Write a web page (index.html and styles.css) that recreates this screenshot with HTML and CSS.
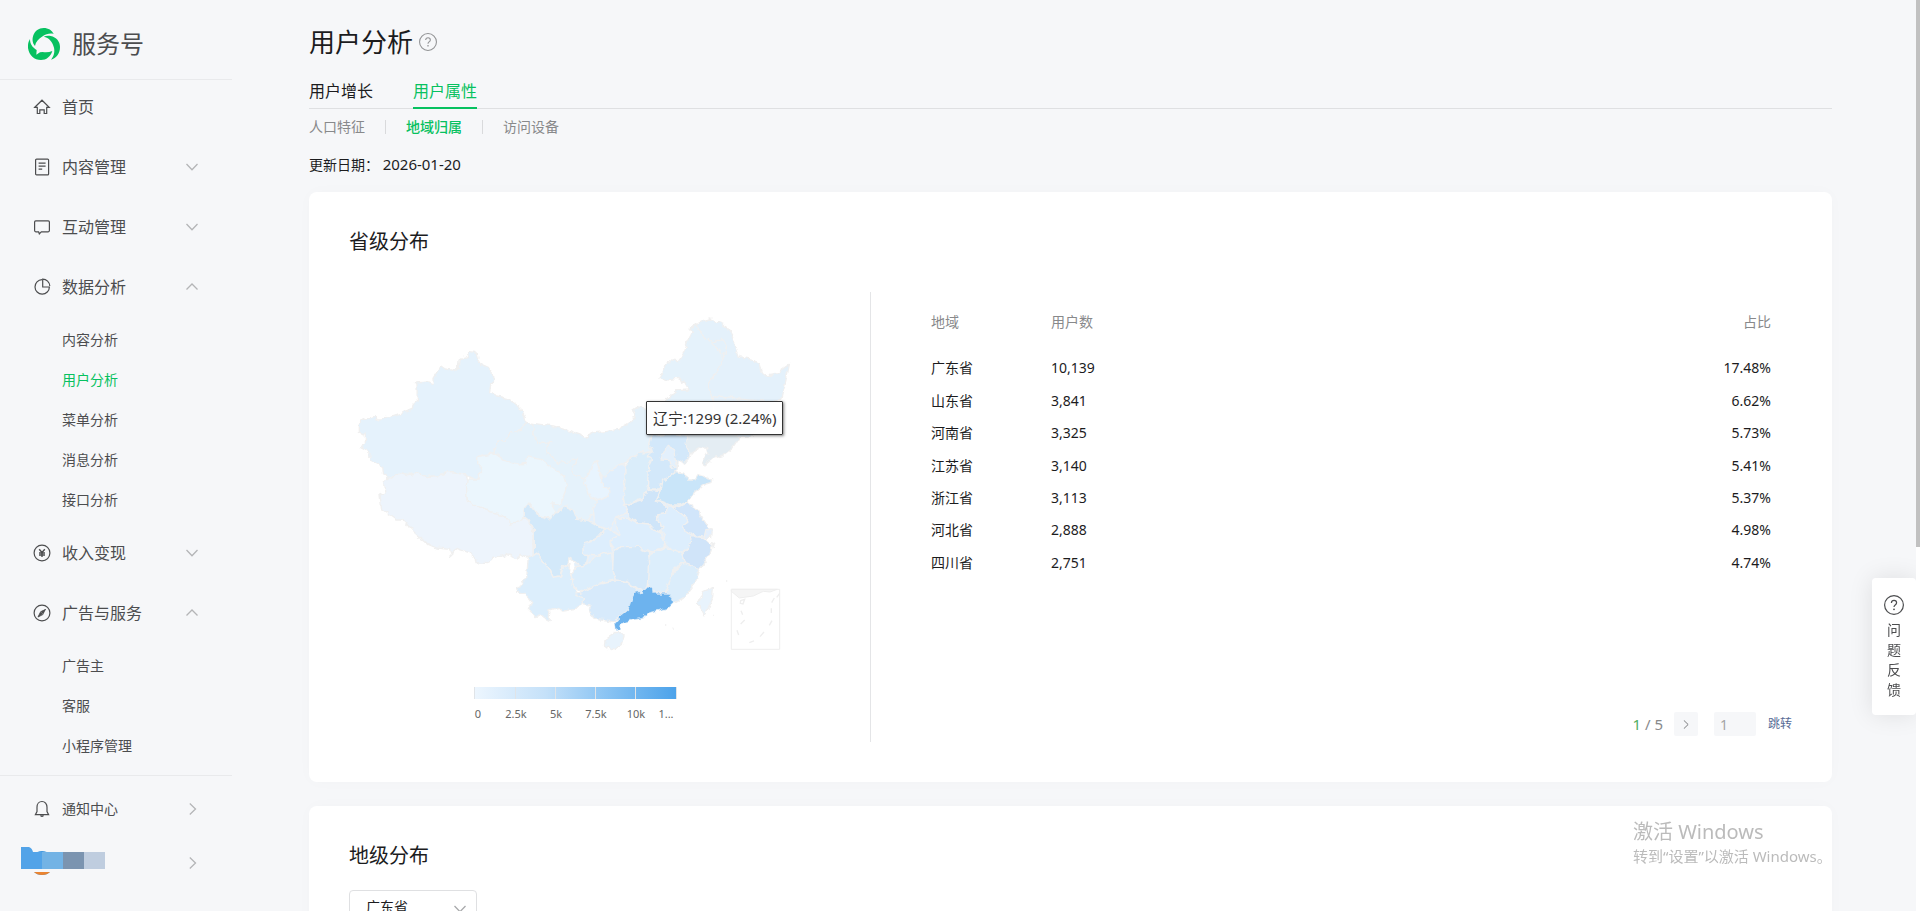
FILE: index.html
```html
<!DOCTYPE html>
<html lang="zh-CN">
<head>
<meta charset="utf-8">
<title>用户分析</title>
<link rel="stylesheet" href="styles.css">
</head>
<body>
<svg class="sprite" width="0" height="0" aria-hidden="true">
  <symbol id="down" viewBox="0 0 12 12"><path d="M.5 3 6 8.700 11.500 3" fill="none" stroke="currentColor" stroke-width="1.300"/></symbol>
  <symbol id="up" viewBox="0 0 12 12"><path d="M.5 8.500 6 3l5.500 5.500" fill="none" stroke="currentColor" stroke-width="1.300"/></symbol>
  <symbol id="right" viewBox="0 0 12 12"><path d="M3.800.5 9.500 6l-5.700 5.500" fill="none" stroke="currentColor" stroke-width="1.300"/></symbol>
  <symbol id="help" viewBox="0 0 20 20"><g fill="none" stroke="currentColor"><circle cx="10" cy="10" r="9.400" stroke-width="1.200"/><path d="M7.400 7.900c0-1.600 1.100-2.600 2.600-2.600s2.600 1 2.600 2.400c0 1.100-.6 1.600-1.400 2.200-.8.6-1.200 1-1.200 2.100" stroke-width="1.200"/></g><circle cx="10" cy="14.300" r=".9" fill="currentColor"/></symbol>
</svg>
<div class="layout">
  <aside class="sidebar">
    <header class="brand">
      <svg class="brand-logo" viewBox="84 84 96 96" fill="#07c160" aria-hidden="true">
        <path d="M105 138C97 130 96 117 100 106 105 93 116 84 131 84c14 0 25 7 30 18-10-3-23 0-33 7-12 8-21 17-23 29z"/>
        <path d="M131 110c6-3 14-4 21-2 17 4 28 16 28 33 0 20-11 34-27 38 8-11 12-21 9-36-4-17-15-31-31-33z"/>
        <path d="M90 117c-5 8-7 18-6 27 3 22 19 36 39 36 16 0 29-10 34-27-9 4-19 5-29 3l-8 1-11 7 1-14c-13-8-20-18-20-33z"/>
      </svg>
      <span>服务号</span>
    </header>
    <nav class="menu">
      <a class="item" href="#"><svg class="icon" viewBox="0 0 18 18"><path d="M1.800 9.300 9 2.200l7.200 7.100h-2.500v6.200h-2.500v-3.700H6.800v3.700H4.300V9.300z"/></svg><span>首页</span></a>
      <a class="item" href="#"><svg class="icon" viewBox="0 0 18 18"><rect x="2.600" y="1.100" width="13" height="15.800" rx="1"/><path d="M5.600 5.200h7M5.600 8.200h7M5.600 11.200h3.600"/></svg><span>内容管理</span><svg class="arrow"><use href="#down"/></svg></a>
      <a class="item" href="#"><svg class="icon" viewBox="0 0 18 18"><path d="M2.800 2.800h12.400q1.200 0 1.200 1.200v8.600q0 1.200-1.200 1.200H8.300L6.300 15.800 5.600 13.800H2.800q-1.200 0-1.200-1.200V4q0-1.200 1.200-1.200z"/></svg><span>互动管理</span><svg class="arrow"><use href="#down"/></svg></a>
      <a class="item" href="#"><svg class="icon" viewBox="0 0 18 18"><path d="M9 1.700a7.200 7.200 0 1 0 7.400 7.300H9.700V1.100A7.300 7.300 0 0 1 16.800 8"/></svg><span>数据分析</span><svg class="arrow"><use href="#up"/></svg></a>
      <div class="submenu">
        <a href="#">内容分析</a>
        <a class="active" href="#">用户分析</a>
        <a href="#">菜单分析</a>
        <a href="#">消息分析</a>
        <a href="#">接口分析</a>
      </div>
      <a class="item" href="#"><svg class="icon" viewBox="0 0 18 18"><circle cx="9" cy="9" r="7.900"/><path d="m6.200 5.200 2.800 3.300 2.800-3.300M6 9h6M6 11h6M9 8.500V13" stroke-width="1.400"/></svg><span>收入变现</span><svg class="arrow"><use href="#down"/></svg></a>
      <a class="item" href="#"><svg class="icon" viewBox="0 0 18 18"><circle cx="9" cy="9" r="7.900"/><path d="M13.200 4.800 10.300 10.300 7.700 7.700z" fill="currentColor" stroke="none"/><path d="M12.500 5.500 7.700 7.700 5 13l5.300-2.700" stroke-width=".9"/><path d="M4.800 13.200 7.700 7.700 10 10z" fill="currentColor" stroke="none"/></svg><span>广告与服务</span><svg class="arrow"><use href="#up"/></svg></a>
      <div class="submenu">
        <a href="#">广告主</a>
        <a href="#">客服</a>
        <a href="#">小程序管理</a>
      </div>
    </nav>
    <footer class="account">
      <a class="item small" href="#"><svg class="icon" viewBox="0 0 18 18"><path d="M2.400 14.600h13.200L14 11.500V7.200C14 4 12 1.500 9 1.500S4 4 4 7.200v4.300zM7.500 15.500q1.500 1.600 3 0"/></svg><span>通知中心</span><svg class="arrow"><use href="#right"/></svg></a>
      <a class="item profile" href="#" aria-label="账号"><svg class="avatar" viewBox="0 0 84 32"><circle cx="21" cy="16" r="12" fill="#3f96dd"/><path d="M13 25h16q-3 3-8 3t-8-3z" fill="#ea8431"/><path d="M0 22V0h8q3 1 4 5h9v17z" fill="#52a3e8"/><path d="M21 5h21v17H21z" fill="#73b3e5"/><path d="M42 5h21v17H42z" fill="#7b94b0"/><path d="M63 5h21v17H63z" fill="#bfcddf"/><path d="M8 22h26v3H8z" fill="#f6f7f9"/></svg><svg class="arrow"><use href="#right"/></svg></a>
    </footer>
  </aside>

  <main class="content">
    <h1 class="page-title">用户分析<svg><use href="#help"/></svg></h1>
    <nav class="tabs"><a href="#">用户增长</a><a class="active" href="#">用户属性</a></nav>
    <nav class="subtabs"><a href="#">人口特征</a><i></i><a class="active" href="#">地域归属</a><i></i><a href="#">访问设备</a></nav>
    <p class="date">更新日期： <time>2026-01-20</time></p>

    <section class="card">
      <h2>省级分布</h2>
      <div class="split">
        <div class="chart">
          <svg class="map" viewBox="9 -8 521 450" role="img" aria-label="省级分布地图">
            <defs>
              <filter id="coast" x="-2%" y="-2%" width="104%" height="104%">
                <feTurbulence type="fractalNoise" baseFrequency=".16" numOctaves="2" seed="4"/>
                <feDisplacementMap in="SourceGraphic" scale="6" xChannelSelector="R" yChannelSelector="G"/>
              </filter>
              <linearGradient id="scale"><stop offset="0" stop-color="#edf6fe"/><stop offset=".35" stop-color="#c5e1f9"/><stop offset=".65" stop-color="#8bc4f3"/><stop offset="1" stop-color="#4ba2ea"/></linearGradient>
            </defs>
            <g filter="url(#coast)"><g transform="scale(.33333)" stroke="#f0f0f0" stroke-width="4" stroke-linejoin="round">
              <path fill="#e3f0fc" stroke="none" d="M400 480 570 380 860 500 950 430 1000 580 1050 620 1095 690 1070 790 1020 870 900 900 830 950 760 940 720 880 690 700 560 640z"/>
              <path fill="#e5f2fc" d="M390 155 408 157 411 173 425 193 445 202 456 218 459 240 450 265 449 278 470 288 500 295 520 307 541 322 548 345 560 367 545 390 515 400 495 418 475 425 460 458 430 464 413 470 418 490 425 508 415 522 418 537 390 532 378 522 320 518 300 527 260 530 230 518 205 524 180 518 165 527 155 537 140 533 130 520 128 502 105 490 89 478 90 460 78 448 62 440 76 434 76 402 58 397 58 372 75 357 108 350 111 360 125 359 136 346 155 349 216 330 219 315 232 302 231 255 226 249 265 246 280 252 279 238 303 198 315 207 345 212 355 205 357 180 370 172 384 170z"/>
              <path fill="#edf4fc" d="M140 535 155 537 165 527 180 518 205 524 230 518 260 530 300 527 320 518 378 522 385 545 380 570 382 600 400 615 450 635 490 643 510 667 535 665 553 652 565 665 578 690 580 765 560 770 543 763 530 777 500 763 455 780 440 791 408 788 405 770 385 757 350 745 338 752 335 767 328 748 290 744 268 735 235 708 215 690 190 660 170 660 125 627 120 580 130 587 138 580 133 545z"/>
              <path fill="#e5f2fb" d="M560 367 578 370 585 415 600 430 630 428 632 440 618 455 655 490 700 480 715 478 697 500 705 525 735 540 750 590 775 600 762 630 745 662 710 655 700 630 675 618 655 635 632 645 625 620 640 560 540 500 465 470 462 455 475 425 495 418 515 400 545 390z"/>
              <path fill="#ebf6fd" d="M385 537 418 537 415 522 425 508 413 490 413 470 465 461 490 478 530 492 555 490 560 470 600 478 640 503 670 525 681 560 670 590 657 612 635 612 650 635 637 657 600 648 580 625 565 608 553 625 553 650 540 665 512 669 490 643 450 635 400 615 382 600 380 570z"/>
              <path fill="#d3e9fa" d="M565 608 580 625 600 648 630 657 645 640 665 635 675 618 700 630 710 655 745 662 760 670 800 690 785 706 750 725 735 735 728 755 745 770 740 790 725 800 705 785 690 775 685 795 665 805 660 828 640 832 625 805 595 760 580 768 580 690 565 660 553 650 553 625z"/>
              <path fill="#dceefc" d="M565 765 580 770 595 760 625 805 640 832 662 828 668 805 690 790 685 815 700 840 705 875 735 895 725 915 705 925 670 930 655 922 630 930 627 962 612 955 600 945 585 950 565 930 575 908 555 880 530 880 545 850 560 835z"/>
              <g transform="translate(690)">
                <path fill="#e5f2fb" d="M-112 370-50 378-10 390 45 412 75 398 105 395 145 388 180 368 195 350 188 328 200 320 230 325 270 320 283 305 320 272 357 270 345 248 325 235 285 240 270 235 290 182 325 185 342 160 355 120 367 97 357 88 378 70 390 95 425 120 450 125 468 150 460 180 440 215 415 255 425 290 430 350 355 410 245 412 240 430 245 455 205 460 170 485 120 510 100 540 80 482 60 520 45 540 15 525 7 500 25 478-35 490-72 455-58 428-90 430-105 415z"/>
                <path fill="#e4f1fb" d="M357 88 385 65 420 57 460 70 485 105 508 170 545 178 570 195 580 225 615 222 658 193 652 225 635 298 600 310 430 305 415 255 440 215 460 180 450 150 425 128 390 95 378 74z"/>
                <path fill="none" d="M425 130 455 115 470 140 460 180"/>
                <path fill="#e5f1fb" d="M425 290 600 305 600 340 560 390 540 412 500 412 450 370z"/>
                <path fill="#e4edf3" d="M350 405 400 380 490 400 505 415 485 445 460 465 430 475 405 495 397 490 413 460 410 442 395 440 358 462 345 435z"/>
                <path fill="#e8f4fe" d="M80 482 90 520 100 545 118 565 118 590 85 602 60 590 40 535 60 520 68 495z"/>
                <path fill="#e0effd" d="M165 490 165 545 160 615 170 640 135 655 120 690 70 670 68 630 85 602 118 590 115 565 90 550 100 530 125 508z"/>
                <path fill="#daedfa" d="M180 480 205 460 240 457 245 470 232 495 237 530 230 572 225 590 165 615 160 590 165 545 165 500z"/>
                <path fill="#d3e8fa" d="M245 410 300 400 350 405 345 435 360 462 355 480 340 488 325 480 320 515 305 525 285 545 270 570 232 570 235 500 245 480 232 470 247 455 240 430z"/>
                <path fill="#e3f0fc" d="M290 435 315 450 318 475 322 500 305 505 300 482 270 480 275 460 285 455z"/>
                <path fill="#c9e5f9" d="M320 515 345 520 350 540 375 540 385 525 428 537 425 548 400 555 375 575 352 605 330 615 300 615 260 600 270 575 275 545z"/>
                <path fill="#cfe5f9" d="M230 570 270 575 258 600 290 620 290 640 262 645 265 665 282 680 275 697 250 688 235 672 200 668 180 650 163 616 215 600z"/>
                <path fill="#ddeefd" d="M290 620 310 616 330 640 360 650 355 665 340 678 345 692 375 707 355 745 335 760 300 745 280 725 285 700 275 694 282 680 262 660 265 645 290 640z"/>
                <path fill="#d1e5fa" d="M300 616 330 620 352 608 385 632 400 660 420 690 405 712 375 707 345 695 340 675 355 665 345 650z"/>
                <path fill="#e3effd" d="M408 688 424 690 422 712 402 712z"/>
                <path fill="#ddeefd" d="M140 655 180 655 200 668 235 672 250 690 275 700 287 740 230 760 200 740 150 740 135 750 115 720 150 705 140 680z"/>
                <path fill="#ddeefd" d="M110 680 145 705 120 725 125 755 80 768 45 765 38 745 45 730 75 722z"/>
                <path fill="#dceefc" d="M5 820 20 800 50 795 85 765 125 755 128 790 135 840 80 852 45 872 20 870 5 850z"/>
                <path fill="#d5e9fa" d="M130 760 150 740 200 740 235 755 240 800 235 862 205 870 175 845 140 840 128 810z"/>
                <path fill="#dceefc" d="M240 762 285 745 330 755 345 785 310 810 290 880 250 875 235 860z"/>
                <path fill="#d0e4f9" d="M365 710 400 712 425 735 415 770 390 805 350 800 335 765 355 745z"/>
                <path fill="#dbedfb" d="M345 790 390 808 375 850 340 895 312 910 285 875 310 815z"/>
                <path fill="#d7eafb" d="M15 880 45 872 80 855 140 842 175 848 200 870 190 900 175 930 145 955 130 963 75 955 55 930 60 915 35 910 45 895z"/>
                <path fill="#6db3ee" stroke="#dcecf8" stroke-width="2" d="M217 865 250 865 252 880 295 880 307 895 310 910 295 925 235 938 220 955 185 960 150 972 148 990 138 995 133 970 150 950 175 930 185 900 195 880 215 878z"/>
                <path fill="#e8f3fc" d="M105 1020 135 1000 163 1002 155 1030 125 1052 103 1035z"/>
                <path fill="#e8f3fc" d="M430 862 428 890 405 948 385 910 400 875z"/>
                <path fill="#eee" d="M425 725 434 730 430 744zM285 975h4M308 985h3M423 945h4M468 843h4"/>
              </g>
            </g></g>
            <g transform="translate(230) scale(.33333)" fill="none" stroke="#eee" stroke-width="3">
              <path d="M484 868h145v180H484z"/>
              <path fill="#f5f5f5" d="M484 868h138l-22 8-20-2-30 14-42 6-24-20z"/>
              <path stroke-width="4" d="m512 902 12-4-5 14-8-2zM513 932l5 12M524 960l-12 12M501 991l5 14M538 1028l14-5M570 1010l12-14M598 976l8-14M604 925v14M605 908l8-14M620 892l9-12"/>
            </g>
            <g class="legend">
              <path fill="url(#scale)" d="M134 387h203v12H134z"/>
              <path stroke="#e0e4e8" d="M134.500 387v12M175.500 387v12M215.500 387v12M255.500 387v12M295.500 387v12M336.500 387v12"/>
              <text x="138" y="418">0</text><text x="176" y="418">2.5k</text><text x="216" y="418">5k</text><text x="256" y="418">7.5k</text><text x="296" y="418">10k</text><text x="326" y="418">1...</text>
            </g>
          </svg>
          <div class="tooltip">辽宁:1299 (2.24%)</div>
        </div>
        <div class="detail">
          <table>
            <thead><tr><th>地域</th><th>用户数</th><th>占比</th></tr></thead>
            <tbody>
              <tr><td>广东省</td><td>10,139</td><td>17.48%</td></tr>
              <tr><td>山东省</td><td>3,841</td><td>6.62%</td></tr>
              <tr><td>河南省</td><td>3,325</td><td>5.73%</td></tr>
              <tr><td>江苏省</td><td>3,140</td><td>5.41%</td></tr>
              <tr><td>浙江省</td><td>3,113</td><td>5.37%</td></tr>
              <tr><td>河北省</td><td>2,888</td><td>4.98%</td></tr>
              <tr><td>四川省</td><td>2,751</td><td>4.74%</td></tr>
            </tbody>
          </table>
          <div class="pager">
            <span class="pages"><b>1</b> / 5</span>
            <button class="next" type="button" aria-label="下一页"><svg><use href="#right"/></svg></button>
            <input type="text" value="1" aria-label="页码">
            <a href="#">跳转</a>
          </div>
        </div>
      </div>
    </section>

    <section class="card">
      <h2>地级分布</h2>
      <div class="picker"><select aria-label="省份"><option>广东省</option></select><svg><use href="#down"/></svg></div>
    </section>
  </main>
  <div class="scrollbar"><div class="thumb"></div></div>
</div>

<button class="feedback" type="button"><svg><use href="#help"/></svg><span>问题反馈</span></button>
<div class="watermark"><p class="wm-title">激活 Windows</p><p>转到“设置”以激活 Windows。</p></div>
</body>
</html>
```
FILE: styles.css
```css
* { box-sizing: border-box; }

body {
  margin: 0;
  background: #f6f7f9;
  color: #1c1c1e;
  font: 14px/20px "Noto Sans", "Noto Sans CJK SC", sans-serif;
}

a { color: inherit; text-decoration: none; }
h1, h2, p { margin: 0; font-weight: 400; }
button, input, select { font: inherit; color: inherit; }
svg { flex: none; }
.sprite { position: absolute; }

.layout { display: flex; height: 100vh; overflow: hidden; }

/* Sidebar */
.sidebar { flex: none; width: 232px; color: #4c4d4f; }
.brand {
  display: flex;
  align-items: center;
  gap: 12px;
  height: 80px;
  padding: 8px 28px 0;
  border-bottom: 1px solid #e9eaec;
  font-size: 24px;
}
.brand-logo { width: 32px; height: 32px; }
.menu { display: flex; flex-direction: column; gap: 6px; }
.item {
  display: flex;
  align-items: center;
  gap: 11px;
  height: 54px;
  padding: 0 34px 0 33px;
  font-size: 16px;
}
.item.small { font-size: 14px; }
.item.profile { padding-left: 21px; }
.icon {
  width: 18px;
  height: 18px;
  fill: none;
  stroke: currentColor;
  stroke-width: 1.2;
}
.arrow { width: 12px; height: 12px; margin-left: auto; color: #b4b5b7; }
.submenu a { display: block; padding-left: 62px; line-height: 40px; }
.submenu .active { color: #07c160; }
.account { margin-top: 9px; padding-top: 6px; border-top: 1px solid #e9eaec; }
.avatar { width: 84px; height: 32px; }

/* Page heading */
.content { flex: 1; min-width: 0; padding: 22px 84px 0 77px; overflow: hidden; }
.page-title { display: flex; align-items: center; gap: 6px; font-size: 26px; line-height: 40px; }
.page-title svg { width: 18px; height: 18px; color: #929395; }
.tabs {
  display: flex;
  gap: 40px;
  margin-top: 17px;
  border-bottom: 1px solid #dfe0e2;
  font-size: 16px;
  line-height: 24px;
}
.tabs a { margin-bottom: -1px; padding-bottom: 4px; border-bottom: 2px solid transparent; }
.tabs .active { border-color: #07c160; color: #07c160; }
.subtabs { display: flex; align-items: center; gap: 20px; margin-top: 8px; color: #88898b; }
.subtabs i { width: 1px; height: 14px; background: #d9dadc; }
.subtabs .active { color: #07c160; font-weight: 500; }
.date { margin: 18px 0 17px; }
.date time { font-size: 15px; line-height: 1; }

/* Cards */
.card {
  margin-bottom: 24px;
  padding: 36px 40px 40px;
  border-radius: 8px;
  background: #fff;
  box-shadow: 0 0 16px rgba(0, 0, 0, .02);
}
.card h2 { font-size: 20px; line-height: 28px; }
.split { display: flex; min-height: 450px; margin-top: 36px; }
.chart { position: relative; flex: none; border-right: 1px solid #e4e5e7; }
.map { display: block; width: 521px; height: 450px; }
.legend text { fill: #666; font-size: 11px; text-anchor: middle; }
.tooltip {
  position: absolute;
  left: 297px;
  top: 109px;
  padding: 6px;
  border: 1px solid #333;
  border-radius: 1px;
  background: rgba(255, 255, 255, .92);
  box-shadow: 1px 1px 3px rgba(0, 0, 0, .5);
  color: #333;
  font-size: 15px;
  white-space: nowrap;
}
.detail { display: flex; flex: 1; flex-direction: column; justify-content: space-between; }
table { width: 100%; border-collapse: collapse; line-height: 1.6; }
th, td { padding: 5px 0; text-align: left; font-weight: 400; }
th { padding: 19px 0; color: #88898b; }
th:first-child, td:first-child { width: 180px; padding-left: 60px; }
th:last-child, td:last-child { padding-right: 21px; text-align: right; }

.pager { display: flex; align-items: center; justify-content: flex-end; padding-bottom: 6px; font-size: 12px; }
.pages { margin-right: 11px; color: #88898b; font-size: 15px; }
.pages b { color: #4fae62; font-weight: 400; }
.next {
  display: grid;
  place-items: center;
  width: 24px;
  height: 24px;
  margin-right: 16px;
  padding: 0;
  border: 0;
  border-radius: 2px;
  background: #f6f7f9;
  color: #77787a;
}
.next svg { width: 9px; height: 9px; }
.pager input {
  width: 42px;
  height: 24px;
  margin-right: 12px;
  padding: 0 6px;
  border: 0;
  border-radius: 2px;
  background: #f6f7f9;
  color: #a3a4a6;
  font-size: 14px;
}
.pager a { color: #576b95; }

.picker { position: relative; width: 128px; margin-top: 20px; }
.picker select {
  appearance: none;
  width: 100%;
  height: 36px;
  padding: 0 16px 2px;
  border: 1px solid #dfe0e2;
  border-radius: 4px;
  background: #fff;
}
.picker svg { position: absolute; right: 11px; top: 13px; width: 12px; height: 12px; color: #a8a9ab; pointer-events: none; }

/* Window furniture */
.scrollbar { flex: none; width: 4px; background: #fff; }
.thumb { height: 60%; background: #c1c1c1; }
.feedback {
  position: fixed;
  right: 4px;
  top: 578px;
  display: flex;
  flex-direction: column;
  align-items: center;
  gap: 5px;
  width: 44px;
  padding: 17px 0 15px;
  border: 0;
  border-radius: 4px;
  background: #fff;
  box-shadow: 0 0 24px rgba(0, 0, 0, .1);
  clip-path: inset(-40px 0 -40px -40px);
  color: #4c4d4f;
}
.feedback svg { width: 20px; height: 20px; }
.feedback span { width: 14px; }
.watermark { position: fixed; right: 88px; top: 818px; width: 199px; color: #bbb; font-size: 15px; white-space: nowrap; pointer-events: none; }
.wm-title { font-size: 20px; line-height: 28px; }
```
